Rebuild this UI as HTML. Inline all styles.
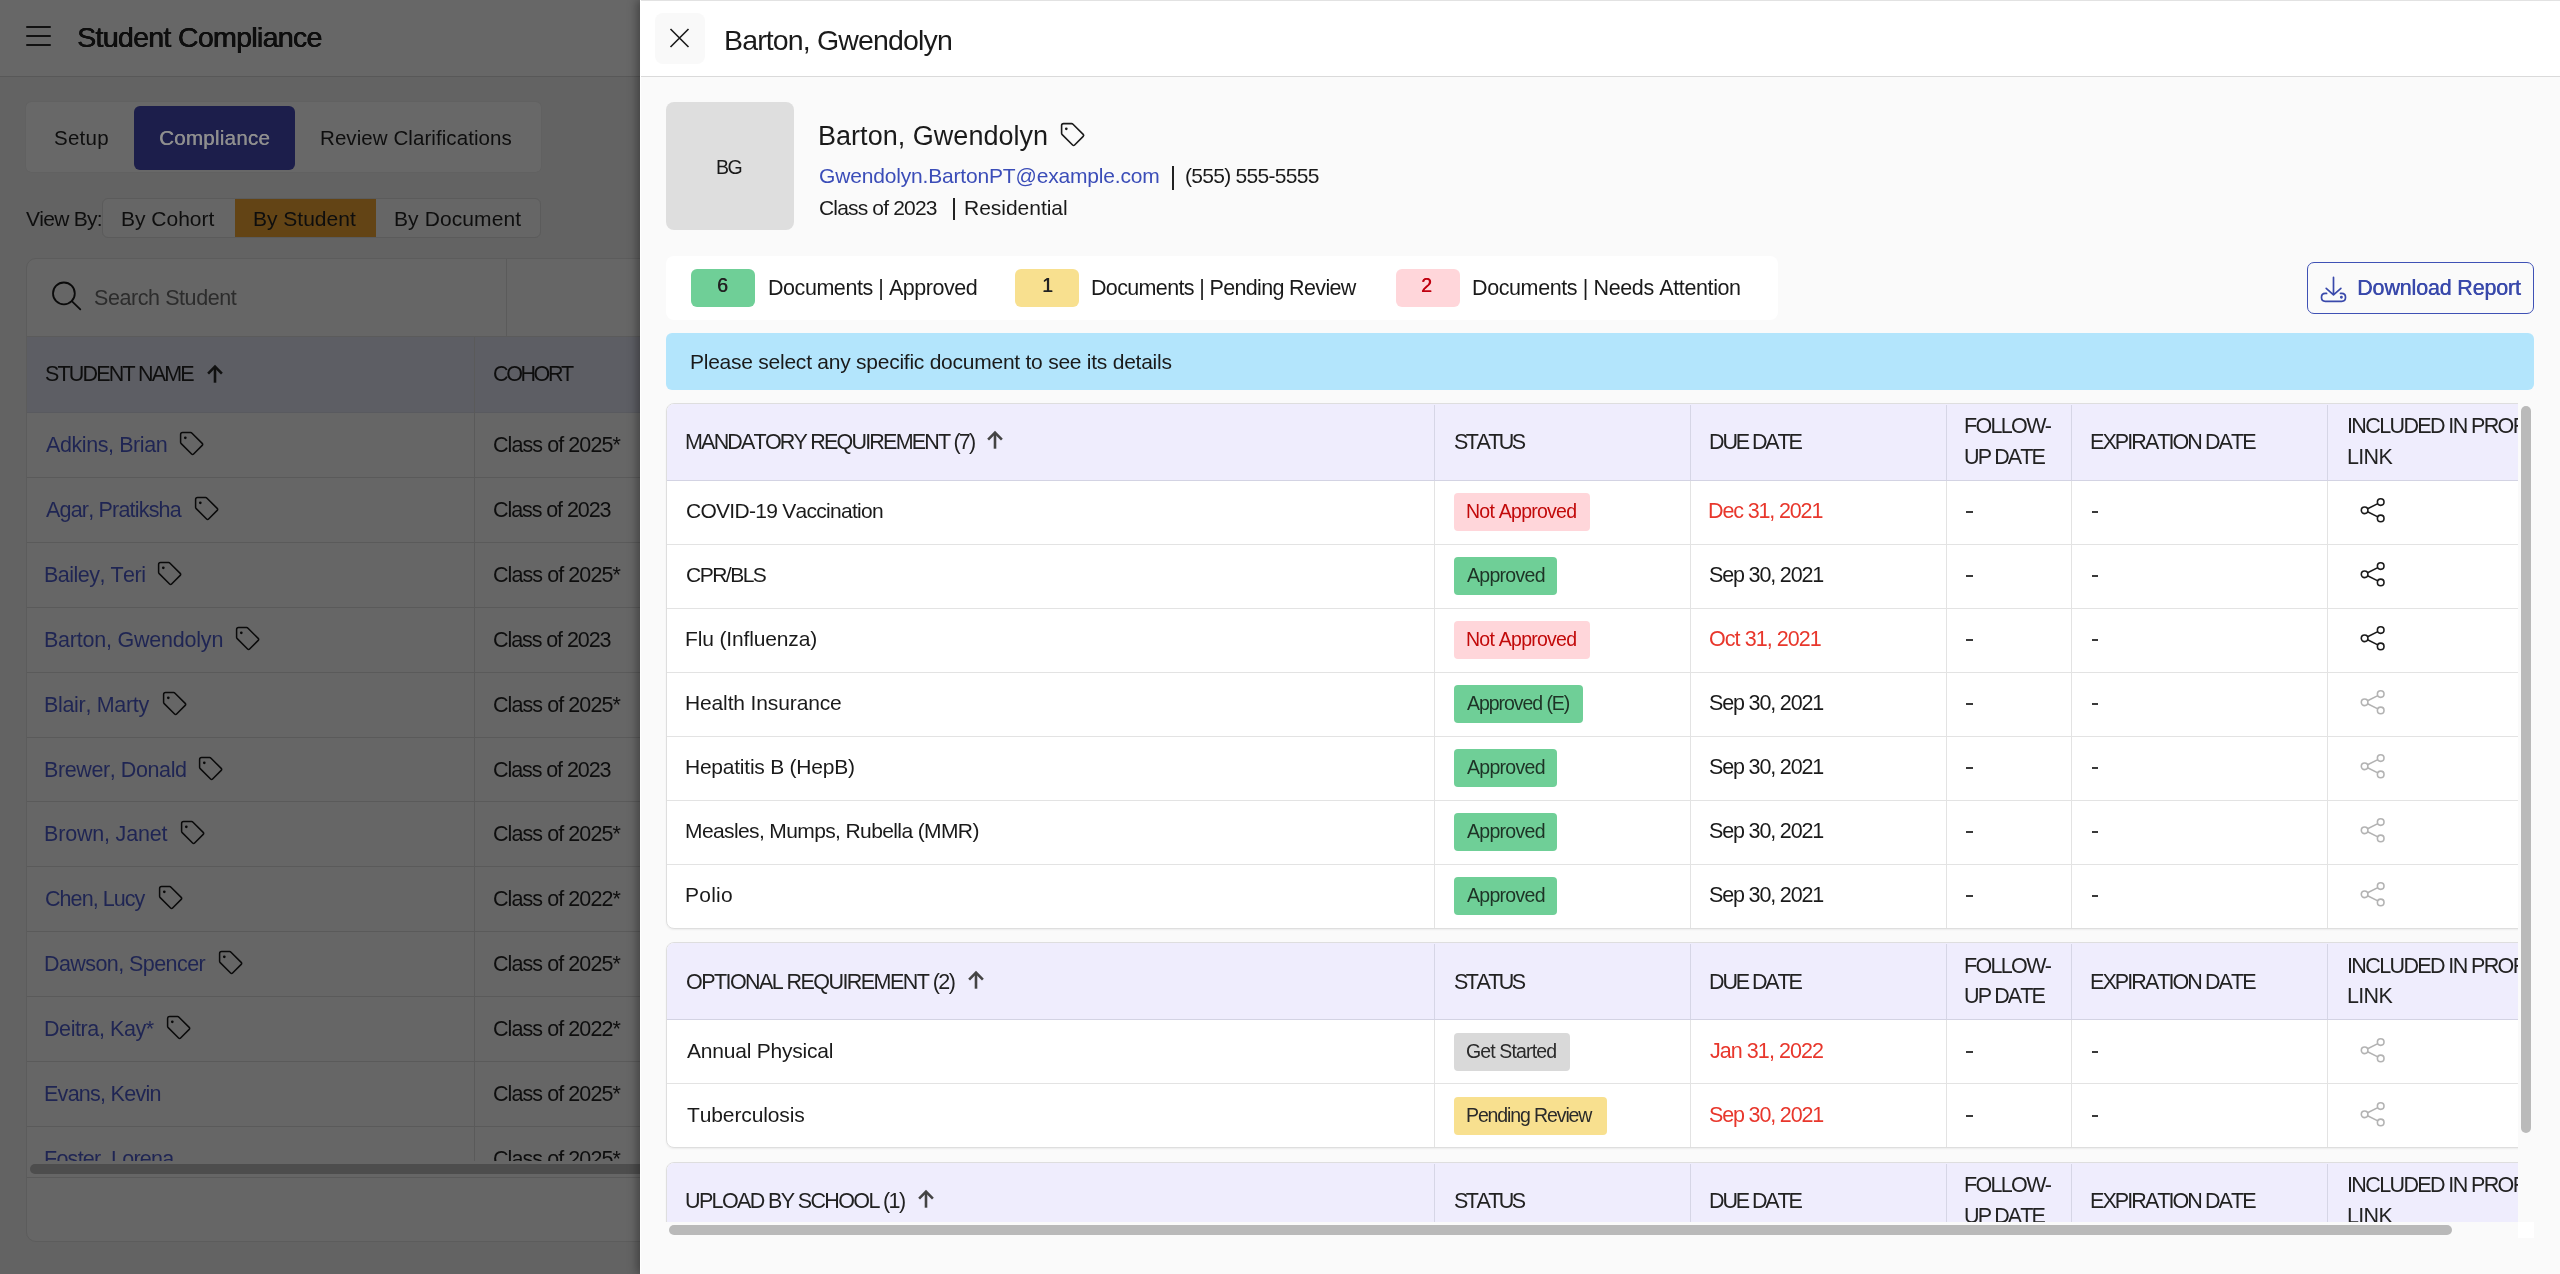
<!DOCTYPE html>
<html><head><meta charset="utf-8"><title>Student Compliance</title>
<style>
html,body{margin:0;padding:0}
body{width:2560px;height:1274px;overflow:hidden;position:relative;background:#636363;font-family:"Liberation Sans",sans-serif;font-kerning:none;}
body div{position:absolute}
.t{white-space:pre;will-change:transform}
</style></head><body>
<div style="left:0;top:0;width:640px;height:76px;background:#676767;border-bottom:1px solid #585858"></div><div style="left:26px;top:26.3px;width:25px;height:1.7px;background:#111;border-radius:1px"></div><div style="left:26px;top:35.3px;width:25px;height:1.7px;background:#111;border-radius:1px"></div><div style="left:26px;top:44.3px;width:25px;height:1.7px;background:#111;border-radius:1px"></div><div style="left:26px;top:102px;width:515px;height:70px;background:#686868;border-radius:5px;box-shadow:0 0 1px rgba(0,0,0,0.12)"></div><div style="left:134px;top:106px;width:161px;height:64px;background:#1c1e4b;border-radius:6px"></div><div style="left:102px;top:198px;width:437px;height:38px;background:#666;border:1px solid #5b5b5b;border-radius:6px"></div><div style="left:235px;top:199px;width:141px;height:38px;background:#634415"></div><div style="left:26px;top:258px;width:1000px;height:982px;background:#666;border:1px solid #5c5c5c;border-radius:10px"></div><div style="left:27px;top:336px;width:613px;height:1px;background:#5b5b5b"></div><div style="left:506px;top:259px;width:1px;height:77px;background:#5b5b5b"></div><svg style="position:absolute;left:50px;top:280px" width="34" height="34" viewBox="0 0 34 34" fill="none" stroke="#0a0a0a" stroke-width="1.8"><circle cx="13.9" cy="13.4" r="10.9"/><path d="M21.8 21.2 L30.3 29.4" stroke-linecap="round"/></svg><div style="left:27px;top:337px;width:613px;height:75px;background:#5d5e64"></div><div style="left:27px;top:412px;width:613px;height:1px;background:#595a5f"></div><div style="left:474px;top:337px;width:1px;height:824px;background:#5a5a5a"></div><div style="left:27px;top:476.90px;width:613px;height:1px;background:#5a5a5a"></div><div style="left:27px;top:541.80px;width:613px;height:1px;background:#5a5a5a"></div><div style="left:27px;top:606.70px;width:613px;height:1px;background:#5a5a5a"></div><div style="left:27px;top:671.60px;width:613px;height:1px;background:#5a5a5a"></div><div style="left:27px;top:736.50px;width:613px;height:1px;background:#5a5a5a"></div><div style="left:27px;top:801.40px;width:613px;height:1px;background:#5a5a5a"></div><div style="left:27px;top:866.30px;width:613px;height:1px;background:#5a5a5a"></div><div style="left:27px;top:931.20px;width:613px;height:1px;background:#5a5a5a"></div><div style="left:27px;top:996.10px;width:613px;height:1px;background:#5a5a5a"></div><div style="left:27px;top:1061.00px;width:613px;height:1px;background:#5a5a5a"></div><div style="left:27px;top:1125.90px;width:613px;height:1px;background:#5a5a5a"></div><svg style="position:absolute;left:202.00px;top:360.50px" width="26" height="26" viewBox="0 0 26 26" fill="none" stroke="#111" stroke-width="2.6"><path d="M13 6.5 V21.7"/><path d="M6.1 12.6 L13 5.7 L19.9 12.6" stroke-linejoin="miter"/></svg><svg style="position:absolute;left:177.50px;top:430.00px" width="28" height="28" viewBox="0 0 28 28"><path d="M2.6 4.6 Q2.6 2.6 4.6 2.6 L12.6 2.6 Q13.4 2.6 14 3.2 L24.2 13.4 Q25.2 14.4 24.2 15.4 L15.6 24 Q14.6 25 13.6 24 L3.2 13.6 Q2.6 13 2.6 12.2 Z" fill="none" stroke="#0a0a0a" stroke-width="1.5" stroke-linejoin="round"/><circle cx="7.3" cy="7.8" r="1.35" fill="#0a0a0a"/></svg><svg style="position:absolute;left:193.20px;top:494.90px" width="28" height="28" viewBox="0 0 28 28"><path d="M2.6 4.6 Q2.6 2.6 4.6 2.6 L12.6 2.6 Q13.4 2.6 14 3.2 L24.2 13.4 Q25.2 14.4 24.2 15.4 L15.6 24 Q14.6 25 13.6 24 L3.2 13.6 Q2.6 13 2.6 12.2 Z" fill="none" stroke="#0a0a0a" stroke-width="1.5" stroke-linejoin="round"/><circle cx="7.3" cy="7.8" r="1.35" fill="#0a0a0a"/></svg><svg style="position:absolute;left:155.90px;top:559.80px" width="28" height="28" viewBox="0 0 28 28"><path d="M2.6 4.6 Q2.6 2.6 4.6 2.6 L12.6 2.6 Q13.4 2.6 14 3.2 L24.2 13.4 Q25.2 14.4 24.2 15.4 L15.6 24 Q14.6 25 13.6 24 L3.2 13.6 Q2.6 13 2.6 12.2 Z" fill="none" stroke="#0a0a0a" stroke-width="1.5" stroke-linejoin="round"/><circle cx="7.3" cy="7.8" r="1.35" fill="#0a0a0a"/></svg><svg style="position:absolute;left:234.00px;top:624.70px" width="28" height="28" viewBox="0 0 28 28"><path d="M2.6 4.6 Q2.6 2.6 4.6 2.6 L12.6 2.6 Q13.4 2.6 14 3.2 L24.2 13.4 Q25.2 14.4 24.2 15.4 L15.6 24 Q14.6 25 13.6 24 L3.2 13.6 Q2.6 13 2.6 12.2 Z" fill="none" stroke="#0a0a0a" stroke-width="1.5" stroke-linejoin="round"/><circle cx="7.3" cy="7.8" r="1.35" fill="#0a0a0a"/></svg><svg style="position:absolute;left:161.00px;top:689.60px" width="28" height="28" viewBox="0 0 28 28"><path d="M2.6 4.6 Q2.6 2.6 4.6 2.6 L12.6 2.6 Q13.4 2.6 14 3.2 L24.2 13.4 Q25.2 14.4 24.2 15.4 L15.6 24 Q14.6 25 13.6 24 L3.2 13.6 Q2.6 13 2.6 12.2 Z" fill="none" stroke="#0a0a0a" stroke-width="1.5" stroke-linejoin="round"/><circle cx="7.3" cy="7.8" r="1.35" fill="#0a0a0a"/></svg><svg style="position:absolute;left:197.30px;top:754.50px" width="28" height="28" viewBox="0 0 28 28"><path d="M2.6 4.6 Q2.6 2.6 4.6 2.6 L12.6 2.6 Q13.4 2.6 14 3.2 L24.2 13.4 Q25.2 14.4 24.2 15.4 L15.6 24 Q14.6 25 13.6 24 L3.2 13.6 Q2.6 13 2.6 12.2 Z" fill="none" stroke="#0a0a0a" stroke-width="1.5" stroke-linejoin="round"/><circle cx="7.3" cy="7.8" r="1.35" fill="#0a0a0a"/></svg><svg style="position:absolute;left:178.50px;top:819.40px" width="28" height="28" viewBox="0 0 28 28"><path d="M2.6 4.6 Q2.6 2.6 4.6 2.6 L12.6 2.6 Q13.4 2.6 14 3.2 L24.2 13.4 Q25.2 14.4 24.2 15.4 L15.6 24 Q14.6 25 13.6 24 L3.2 13.6 Q2.6 13 2.6 12.2 Z" fill="none" stroke="#0a0a0a" stroke-width="1.5" stroke-linejoin="round"/><circle cx="7.3" cy="7.8" r="1.35" fill="#0a0a0a"/></svg><svg style="position:absolute;left:157.10px;top:884.30px" width="28" height="28" viewBox="0 0 28 28"><path d="M2.6 4.6 Q2.6 2.6 4.6 2.6 L12.6 2.6 Q13.4 2.6 14 3.2 L24.2 13.4 Q25.2 14.4 24.2 15.4 L15.6 24 Q14.6 25 13.6 24 L3.2 13.6 Q2.6 13 2.6 12.2 Z" fill="none" stroke="#0a0a0a" stroke-width="1.5" stroke-linejoin="round"/><circle cx="7.3" cy="7.8" r="1.35" fill="#0a0a0a"/></svg><svg style="position:absolute;left:216.50px;top:949.20px" width="28" height="28" viewBox="0 0 28 28"><path d="M2.6 4.6 Q2.6 2.6 4.6 2.6 L12.6 2.6 Q13.4 2.6 14 3.2 L24.2 13.4 Q25.2 14.4 24.2 15.4 L15.6 24 Q14.6 25 13.6 24 L3.2 13.6 Q2.6 13 2.6 12.2 Z" fill="none" stroke="#0a0a0a" stroke-width="1.5" stroke-linejoin="round"/><circle cx="7.3" cy="7.8" r="1.35" fill="#0a0a0a"/></svg><svg style="position:absolute;left:165.00px;top:1014.10px" width="28" height="28" viewBox="0 0 28 28"><path d="M2.6 4.6 Q2.6 2.6 4.6 2.6 L12.6 2.6 Q13.4 2.6 14 3.2 L24.2 13.4 Q25.2 14.4 24.2 15.4 L15.6 24 Q14.6 25 13.6 24 L3.2 13.6 Q2.6 13 2.6 12.2 Z" fill="none" stroke="#0a0a0a" stroke-width="1.5" stroke-linejoin="round"/><circle cx="7.3" cy="7.8" r="1.35" fill="#0a0a0a"/></svg><div style="left:30px;top:1164px;width:620px;height:9.6px;background:#4d4d4d;border-radius:5px"></div><div style="left:27px;top:1177px;width:613px;height:1px;background:#5a5a5a"></div>
<div class="t" style="left:76.70px;top:23.00px;font-size:28.5px;line-height:28.5px;letter-spacing:-0.676px;color:#0e0e0e;text-shadow:0.6px 0 0 #0e0e0e,0 0.3px 0 #0e0e0e;">Student Compliance</div><div class="t" style="left:54.00px;top:127.70px;font-size:20.5px;line-height:20.5px;letter-spacing:0.250px;color:#0e0e0e;">Setup</div><div class="t" style="left:159.00px;top:127.70px;font-size:20.5px;line-height:20.5px;letter-spacing:0.278px;color:#8f8f8f;text-shadow:0.4px 0 0 #8f8f8f;">Compliance</div><div class="t" style="left:320.00px;top:127.70px;font-size:20.5px;line-height:20.5px;letter-spacing:0.075px;color:#0e0e0e;">Review Clarifications</div><div class="t" style="left:26.00px;top:207.60px;font-size:21px;line-height:21px;letter-spacing:-0.714px;color:#0e0e0e;">View By:</div><div class="t" style="left:121.00px;top:207.60px;font-size:21px;line-height:21px;letter-spacing:0.000px;color:#0e0e0e;">By Cohort</div><div class="t" style="left:253.00px;top:207.60px;font-size:21px;line-height:21px;letter-spacing:0.000px;color:#0e0e0e;">By Student</div><div class="t" style="left:394.00px;top:207.60px;font-size:21px;line-height:21px;letter-spacing:0.100px;color:#0e0e0e;">By Document</div><div class="t" style="left:93.50px;top:288.00px;font-size:21.5px;line-height:21.5px;letter-spacing:-0.423px;color:#2c2c2c;">Search Student</div><div class="t" style="left:45.00px;top:364.00px;font-size:21.5px;line-height:21.5px;letter-spacing:-1.818px;color:#0e0e0e;">STUDENT NAME</div><div class="t" style="left:493.00px;top:364.00px;font-size:21.5px;line-height:21.5px;letter-spacing:-2.400px;color:#0e0e0e;">COHORT</div><div class="t" style="left:46.00px;top:435.00px;font-size:21.5px;line-height:21.5px;letter-spacing:-0.417px;color:#1f2553;">Adkins, Brian</div><div class="t" style="left:493.00px;top:435.00px;font-size:21.5px;line-height:21.5px;letter-spacing:-0.923px;color:#0e0e0e;">Class of 2025*</div><div class="t" style="left:46.00px;top:499.90px;font-size:21.5px;line-height:21.5px;letter-spacing:-0.807px;color:#1f2553;">Agar, Pratiksha</div><div class="t" style="left:493.00px;top:499.90px;font-size:21.5px;line-height:21.5px;letter-spacing:-1.083px;color:#0e0e0e;">Class of 2023</div><div class="t" style="left:44.00px;top:564.80px;font-size:21.5px;line-height:21.5px;letter-spacing:-0.509px;color:#1f2553;">Bailey, Teri</div><div class="t" style="left:493.00px;top:564.80px;font-size:21.5px;line-height:21.5px;letter-spacing:-0.923px;color:#0e0e0e;">Class of 2025*</div><div class="t" style="left:44.00px;top:629.70px;font-size:21.5px;line-height:21.5px;letter-spacing:-0.219px;color:#1f2553;">Barton, Gwendolyn</div><div class="t" style="left:493.00px;top:629.70px;font-size:21.5px;line-height:21.5px;letter-spacing:-1.083px;color:#0e0e0e;">Class of 2023</div><div class="t" style="left:44.00px;top:694.60px;font-size:21.5px;line-height:21.5px;letter-spacing:-0.318px;color:#1f2553;">Blair, Marty</div><div class="t" style="left:493.00px;top:694.60px;font-size:21.5px;line-height:21.5px;letter-spacing:-0.923px;color:#0e0e0e;">Class of 2025*</div><div class="t" style="left:44.00px;top:759.50px;font-size:21.5px;line-height:21.5px;letter-spacing:-0.400px;color:#1f2553;">Brewer, Donald</div><div class="t" style="left:493.00px;top:759.50px;font-size:21.5px;line-height:21.5px;letter-spacing:-1.083px;color:#0e0e0e;">Class of 2023</div><div class="t" style="left:44.00px;top:824.40px;font-size:21.5px;line-height:21.5px;letter-spacing:-0.182px;color:#1f2553;">Brown, Janet</div><div class="t" style="left:493.00px;top:824.40px;font-size:21.5px;line-height:21.5px;letter-spacing:-0.923px;color:#0e0e0e;">Class of 2025*</div><div class="t" style="left:45.00px;top:889.30px;font-size:21.5px;line-height:21.5px;letter-spacing:-0.933px;color:#1f2553;">Chen, Lucy</div><div class="t" style="left:493.00px;top:889.30px;font-size:21.5px;line-height:21.5px;letter-spacing:-0.923px;color:#0e0e0e;">Class of 2022*</div><div class="t" style="left:44.00px;top:954.20px;font-size:21.5px;line-height:21.5px;letter-spacing:-0.571px;color:#1f2553;">Dawson, Spencer</div><div class="t" style="left:493.00px;top:954.20px;font-size:21.5px;line-height:21.5px;letter-spacing:-0.923px;color:#0e0e0e;">Class of 2025*</div><div class="t" style="left:44.00px;top:1019.10px;font-size:21.5px;line-height:21.5px;letter-spacing:-0.409px;color:#1f2553;">Deitra, Kay*</div><div class="t" style="left:493.00px;top:1019.10px;font-size:21.5px;line-height:21.5px;letter-spacing:-0.923px;color:#0e0e0e;">Class of 2022*</div><div class="t" style="left:44.00px;top:1084.00px;font-size:21.5px;line-height:21.5px;letter-spacing:-0.727px;color:#1f2553;">Evans, Kevin</div><div class="t" style="left:493.00px;top:1084.00px;font-size:21.5px;line-height:21.5px;letter-spacing:-0.923px;color:#0e0e0e;">Class of 2025*</div><div style="position:absolute;left:0;top:0;width:640px;height:1161px;overflow:hidden"><div class="t" style="left:44.00px;top:1148.90px;font-size:21.5px;line-height:21.5px;letter-spacing:-0.738px;color:#1f2553;">Foster, Lorena</div></div><div style="position:absolute;left:0;top:0;width:640px;height:1161px;overflow:hidden"><div class="t" style="left:493.00px;top:1148.90px;font-size:21.5px;line-height:21.5px;letter-spacing:-0.923px;color:#0e0e0e;">Class of 2025*</div></div>
<div style="left:640px;top:0;width:1920px;height:1274px;background:#fafafa;box-shadow:-3px 0 9px rgba(0,0,0,0.35)"></div><div style="left:640px;top:0;width:1px;height:1274px;background:#fff"></div><div style="left:641px;top:0;width:1919px;height:76px;background:#fff;border-top:1px solid #e2e2e2;box-sizing:border-box"></div><div style="left:641px;top:76px;width:1919px;height:1px;background:#dadada"></div><div style="left:655px;top:13px;width:50px;height:51px;background:#f9f9f9;border-radius:8px"></div><svg style="position:absolute;left:668px;top:27px" width="23" height="23" viewBox="0 0 23 23" stroke="#1a1a1a" stroke-width="1.6"><path d="M2.5 2 L20.5 20 M20.5 2 L2.5 20"/></svg><div style="left:666px;top:102px;width:128px;height:128px;background:#dedede;border-radius:8px"></div><svg style="position:absolute;left:1058.50px;top:120.50px" width="28" height="28" viewBox="0 0 28 28"><path d="M2.6 4.6 Q2.6 2.6 4.6 2.6 L12.6 2.6 Q13.4 2.6 14 3.2 L24.2 13.4 Q25.2 14.4 24.2 15.4 L15.6 24 Q14.6 25 13.6 24 L3.2 13.6 Q2.6 13 2.6 12.2 Z" fill="none" stroke="#1a1a1a" stroke-width="1.6" stroke-linejoin="round"/><circle cx="7.3" cy="7.8" r="1.35" fill="#1a1a1a"/></svg><div style="left:1172.3px;top:166px;width:1.6px;height:24px;background:#222"></div><div style="left:953px;top:198px;width:1.6px;height:22px;background:#222"></div><div style="left:666px;top:256px;width:1112px;height:64px;background:#fff;border-radius:8px"></div><div style="left:691px;top:269px;width:64px;height:38px;background:#6fcf97;border-radius:6px"></div><div style="left:1015px;top:269px;width:64px;height:38px;background:#f8e08f;border-radius:6px"></div><div style="left:1396px;top:269px;width:64px;height:38px;background:#ffd6da;border-radius:6px"></div><div style="left:2307px;top:262px;width:227px;height:52px;border:1.4px solid #3f51b5;border-radius:7px;box-sizing:border-box"></div><svg style="position:absolute;left:2316px;top:272px" width="34" height="34" viewBox="0 0 34 34" fill="none" stroke="#3949ab" stroke-width="1.7" stroke-linecap="round" stroke-linejoin="round"><path d="M17.5 5.4 V22.6 M10.2 16.4 L17.5 22.8 L24.9 16.4"/><path d="M10.6 21.4 H9.3 Q5.5 21.4 5.5 25.2 V25.6 Q5.5 29.3 9.3 29.3 H25.7 Q29.5 29.3 29.5 25.6 V25.2 Q29.5 21.4 25.7 21.4 H24.5"/><circle cx="25.4" cy="25.3" r="0.6" fill="#3949ab"/></svg><div style="left:666px;top:333px;width:1868px;height:57px;background:#b3e5fc;border-radius:6px"></div>
<div class="t" style="left:724.00px;top:26.20px;font-size:28.5px;line-height:28.5px;letter-spacing:-0.850px;color:#1a1a1a;">Barton, Gwendolyn</div><div class="t" style="left:818.30px;top:122.80px;font-size:27px;line-height:27px;letter-spacing:0.031px;color:#1a1a1a;">Barton, Gwendolyn</div><div class="t" style="left:716.40px;top:157.60px;font-size:19.5px;line-height:19.5px;letter-spacing:-1.400px;color:#1a1a1a;">BG</div><div class="t" style="left:819.00px;top:165.40px;font-size:21px;line-height:21px;letter-spacing:-0.172px;color:#3b4db8;">Gwendolyn.BartonPT@example.com</div><div class="t" style="left:1185.30px;top:165.40px;font-size:21px;line-height:21px;letter-spacing:-0.715px;color:#1a1a1a;">(555) 555-5555</div><div class="t" style="left:819.00px;top:196.50px;font-size:21px;line-height:21px;letter-spacing:-0.833px;color:#1a1a1a;">Class of 2023</div><div class="t" style="left:963.70px;top:196.50px;font-size:21px;line-height:21px;letter-spacing:-0.020px;color:#1a1a1a;">Residential</div><div class="t" style="left:717.40px;top:275.70px;font-size:19.5px;line-height:19.5px;letter-spacing:0.000px;color:#222;text-shadow:0.5px 0 0 #222;">6</div><div class="t" style="left:1041.50px;top:275.70px;font-size:19.5px;line-height:19.5px;letter-spacing:0.000px;color:#222;text-shadow:0.5px 0 0 #222;">1</div><div class="t" style="left:1421.30px;top:275.70px;font-size:19.5px;line-height:19.5px;letter-spacing:0.000px;color:#c00010;text-shadow:0.5px 0 0 #c00010;">2</div><div class="t" style="left:767.50px;top:277.80px;font-size:21.5px;line-height:21.5px;letter-spacing:-0.447px;color:#1a1a1a;">Documents | Approved</div><div class="t" style="left:1091.30px;top:277.80px;font-size:21.5px;line-height:21.5px;letter-spacing:-0.652px;color:#1a1a1a;">Documents | Pending Review</div><div class="t" style="left:1471.50px;top:277.80px;font-size:21.5px;line-height:21.5px;letter-spacing:-0.392px;color:#1a1a1a;">Documents | Needs Attention</div><div class="t" style="left:2356.50px;top:278.00px;font-size:21.5px;line-height:21.5px;letter-spacing:-0.164px;color:#3949ab;text-shadow:0.5px 0 0 #3949ab;">Download Report</div><div class="t" style="left:690.00px;top:350.80px;font-size:21px;line-height:21px;letter-spacing:-0.245px;color:#1a1a1a;">Please select any specific document to see its details</div>
<div style="left:0;top:0;width:2518px;height:1222px;overflow:hidden">
<div style="left:666px;top:403px;width:1900px;height:525.5px;background:#fff;border:1px solid #dedede;border-radius:8px;box-sizing:border-box;box-shadow:0 1px 2px rgba(0,0,0,0.06)"></div><div style="left:667px;top:404px;width:1899px;height:75.5px;background:#efedfd;border-radius:7px 0 0 0"></div><div style="left:667px;top:479.5px;width:1899px;height:1px;background:#d3d3e3"></div><div style="left:1434px;top:404.5px;width:1px;height:75px;background:#d6d6e6"></div><div style="left:1434px;top:480.5px;width:1px;height:447px;background:#e3e3e3"></div><div style="left:1690px;top:404.5px;width:1px;height:75px;background:#d6d6e6"></div><div style="left:1690px;top:480.5px;width:1px;height:447px;background:#e3e3e3"></div><div style="left:1946px;top:404.5px;width:1px;height:75px;background:#d6d6e6"></div><div style="left:1946px;top:480.5px;width:1px;height:447px;background:#e3e3e3"></div><div style="left:2071px;top:404.5px;width:1px;height:75px;background:#d6d6e6"></div><div style="left:2071px;top:480.5px;width:1px;height:447px;background:#e3e3e3"></div><div style="left:2327px;top:404.5px;width:1px;height:75px;background:#d6d6e6"></div><div style="left:2327px;top:480.5px;width:1px;height:447px;background:#e3e3e3"></div><div style="left:667px;top:543.5px;width:1899px;height:1px;background:#e3e3e3"></div><div style="left:667px;top:607.5px;width:1899px;height:1px;background:#e3e3e3"></div><div style="left:667px;top:671.5px;width:1899px;height:1px;background:#e3e3e3"></div><div style="left:667px;top:735.5px;width:1899px;height:1px;background:#e3e3e3"></div><div style="left:667px;top:799.5px;width:1899px;height:1px;background:#e3e3e3"></div><div style="left:667px;top:863.5px;width:1899px;height:1px;background:#e3e3e3"></div><div style="left:1454px;top:493.0px;width:136px;height:38px;background:#ffd6da;border-radius:4px"></div><div style="left:1966px;top:511px;width:6.5px;height:2px;background:#3a3a3a"></div><div style="left:2091.5px;top:511px;width:6.5px;height:2px;background:#3a3a3a"></div><svg style="position:absolute;left:2360.00px;top:497.00px" width="28" height="28" viewBox="0 0 28 28" fill="none" stroke="#1a1a1a" stroke-width="1.6"><circle cx="20.7" cy="5.1" r="3.3"/><circle cx="4.6" cy="13.3" r="3.3"/><circle cx="20.7" cy="21.4" r="3.3"/><path d="M7.6 11.8 L17.8 6.6 M7.6 14.8 L17.8 19.9"/></svg><div style="left:1454px;top:557.0px;width:103px;height:38px;background:#6fcf97;border-radius:4px"></div><div style="left:1966px;top:575px;width:6.5px;height:2px;background:#3a3a3a"></div><div style="left:2091.5px;top:575px;width:6.5px;height:2px;background:#3a3a3a"></div><svg style="position:absolute;left:2360.00px;top:561.00px" width="28" height="28" viewBox="0 0 28 28" fill="none" stroke="#1a1a1a" stroke-width="1.6"><circle cx="20.7" cy="5.1" r="3.3"/><circle cx="4.6" cy="13.3" r="3.3"/><circle cx="20.7" cy="21.4" r="3.3"/><path d="M7.6 11.8 L17.8 6.6 M7.6 14.8 L17.8 19.9"/></svg><div style="left:1454px;top:621.0px;width:136px;height:38px;background:#ffd6da;border-radius:4px"></div><div style="left:1966px;top:639px;width:6.5px;height:2px;background:#3a3a3a"></div><div style="left:2091.5px;top:639px;width:6.5px;height:2px;background:#3a3a3a"></div><svg style="position:absolute;left:2360.00px;top:625.00px" width="28" height="28" viewBox="0 0 28 28" fill="none" stroke="#1a1a1a" stroke-width="1.6"><circle cx="20.7" cy="5.1" r="3.3"/><circle cx="4.6" cy="13.3" r="3.3"/><circle cx="20.7" cy="21.4" r="3.3"/><path d="M7.6 11.8 L17.8 6.6 M7.6 14.8 L17.8 19.9"/></svg><div style="left:1454px;top:685.0px;width:129px;height:38px;background:#6fcf97;border-radius:4px"></div><div style="left:1966px;top:703px;width:6.5px;height:2px;background:#3a3a3a"></div><div style="left:2091.5px;top:703px;width:6.5px;height:2px;background:#3a3a3a"></div><svg style="position:absolute;left:2360.00px;top:689.00px" width="28" height="28" viewBox="0 0 28 28" fill="none" stroke="#b3b3b3" stroke-width="1.6"><circle cx="20.7" cy="5.1" r="3.3"/><circle cx="4.6" cy="13.3" r="3.3"/><circle cx="20.7" cy="21.4" r="3.3"/><path d="M7.6 11.8 L17.8 6.6 M7.6 14.8 L17.8 19.9"/></svg><div style="left:1454px;top:749.0px;width:103px;height:38px;background:#6fcf97;border-radius:4px"></div><div style="left:1966px;top:767px;width:6.5px;height:2px;background:#3a3a3a"></div><div style="left:2091.5px;top:767px;width:6.5px;height:2px;background:#3a3a3a"></div><svg style="position:absolute;left:2360.00px;top:753.00px" width="28" height="28" viewBox="0 0 28 28" fill="none" stroke="#b3b3b3" stroke-width="1.6"><circle cx="20.7" cy="5.1" r="3.3"/><circle cx="4.6" cy="13.3" r="3.3"/><circle cx="20.7" cy="21.4" r="3.3"/><path d="M7.6 11.8 L17.8 6.6 M7.6 14.8 L17.8 19.9"/></svg><div style="left:1454px;top:813.0px;width:103px;height:38px;background:#6fcf97;border-radius:4px"></div><div style="left:1966px;top:831px;width:6.5px;height:2px;background:#3a3a3a"></div><div style="left:2091.5px;top:831px;width:6.5px;height:2px;background:#3a3a3a"></div><svg style="position:absolute;left:2360.00px;top:817.00px" width="28" height="28" viewBox="0 0 28 28" fill="none" stroke="#b3b3b3" stroke-width="1.6"><circle cx="20.7" cy="5.1" r="3.3"/><circle cx="4.6" cy="13.3" r="3.3"/><circle cx="20.7" cy="21.4" r="3.3"/><path d="M7.6 11.8 L17.8 6.6 M7.6 14.8 L17.8 19.9"/></svg><div style="left:1454px;top:877.0px;width:103px;height:38px;background:#6fcf97;border-radius:4px"></div><div style="left:1966px;top:895px;width:6.5px;height:2px;background:#3a3a3a"></div><div style="left:2091.5px;top:895px;width:6.5px;height:2px;background:#3a3a3a"></div><svg style="position:absolute;left:2360.00px;top:881.00px" width="28" height="28" viewBox="0 0 28 28" fill="none" stroke="#b3b3b3" stroke-width="1.6"><circle cx="20.7" cy="5.1" r="3.3"/><circle cx="4.6" cy="13.3" r="3.3"/><circle cx="20.7" cy="21.4" r="3.3"/><path d="M7.6 11.8 L17.8 6.6 M7.6 14.8 L17.8 19.9"/></svg><div style="left:666px;top:942px;width:1900px;height:206px;background:#fff;border:1px solid #dedede;border-radius:8px;box-sizing:border-box;box-shadow:0 1px 2px rgba(0,0,0,0.06)"></div><div style="left:667px;top:943px;width:1899px;height:76px;background:#efedfd;border-radius:7px 0 0 0"></div><div style="left:667px;top:1019px;width:1899px;height:1px;background:#d3d3e3"></div><div style="left:1434px;top:944px;width:1px;height:75px;background:#d6d6e6"></div><div style="left:1434px;top:1020px;width:1px;height:127px;background:#e3e3e3"></div><div style="left:1690px;top:944px;width:1px;height:75px;background:#d6d6e6"></div><div style="left:1690px;top:1020px;width:1px;height:127px;background:#e3e3e3"></div><div style="left:1946px;top:944px;width:1px;height:75px;background:#d6d6e6"></div><div style="left:1946px;top:1020px;width:1px;height:127px;background:#e3e3e3"></div><div style="left:2071px;top:944px;width:1px;height:75px;background:#d6d6e6"></div><div style="left:2071px;top:1020px;width:1px;height:127px;background:#e3e3e3"></div><div style="left:2327px;top:944px;width:1px;height:75px;background:#d6d6e6"></div><div style="left:2327px;top:1020px;width:1px;height:127px;background:#e3e3e3"></div><div style="left:667px;top:1083px;width:1899px;height:1px;background:#e3e3e3"></div><div style="left:1454px;top:1032.5px;width:116px;height:38px;background:#d9d9d9;border-radius:4px"></div><div style="left:1966px;top:1051px;width:6.5px;height:2px;background:#3a3a3a"></div><div style="left:2091.5px;top:1051px;width:6.5px;height:2px;background:#3a3a3a"></div><svg style="position:absolute;left:2360.00px;top:1036.50px" width="28" height="28" viewBox="0 0 28 28" fill="none" stroke="#b3b3b3" stroke-width="1.6"><circle cx="20.7" cy="5.1" r="3.3"/><circle cx="4.6" cy="13.3" r="3.3"/><circle cx="20.7" cy="21.4" r="3.3"/><path d="M7.6 11.8 L17.8 6.6 M7.6 14.8 L17.8 19.9"/></svg><div style="left:1454px;top:1096.5px;width:153px;height:38px;background:#f8e08f;border-radius:4px"></div><div style="left:1966px;top:1115px;width:6.5px;height:2px;background:#3a3a3a"></div><div style="left:2091.5px;top:1115px;width:6.5px;height:2px;background:#3a3a3a"></div><svg style="position:absolute;left:2360.00px;top:1100.50px" width="28" height="28" viewBox="0 0 28 28" fill="none" stroke="#b3b3b3" stroke-width="1.6"><circle cx="20.7" cy="5.1" r="3.3"/><circle cx="4.6" cy="13.3" r="3.3"/><circle cx="20.7" cy="21.4" r="3.3"/><path d="M7.6 11.8 L17.8 6.6 M7.6 14.8 L17.8 19.9"/></svg><div style="left:666px;top:1162px;width:1900px;height:141.5px;background:#fff;border:1px solid #dedede;border-radius:8px;box-sizing:border-box;box-shadow:0 1px 2px rgba(0,0,0,0.06)"></div><div style="left:667px;top:1163px;width:1899px;height:75.5px;background:#efedfd;border-radius:7px 0 0 0"></div><div style="left:667px;top:1238.5px;width:1899px;height:1px;background:#d3d3e3"></div><div style="left:1434px;top:1163.5px;width:1px;height:75px;background:#d6d6e6"></div><div style="left:1434px;top:1239.5px;width:1px;height:63px;background:#e3e3e3"></div><div style="left:1690px;top:1163.5px;width:1px;height:75px;background:#d6d6e6"></div><div style="left:1690px;top:1239.5px;width:1px;height:63px;background:#e3e3e3"></div><div style="left:1946px;top:1163.5px;width:1px;height:75px;background:#d6d6e6"></div><div style="left:1946px;top:1239.5px;width:1px;height:63px;background:#e3e3e3"></div><div style="left:2071px;top:1163.5px;width:1px;height:75px;background:#d6d6e6"></div><div style="left:2071px;top:1239.5px;width:1px;height:63px;background:#e3e3e3"></div><div style="left:2327px;top:1163.5px;width:1px;height:75px;background:#d6d6e6"></div><div style="left:2327px;top:1239.5px;width:1px;height:63px;background:#e3e3e3"></div><svg style="position:absolute;left:981.90px;top:427.20px" width="26" height="26" viewBox="0 0 26 26" fill="none" stroke="#444" stroke-width="2.6"><path d="M13 6.5 V21.7"/><path d="M6.1 12.6 L13 5.7 L19.9 12.6" stroke-linejoin="miter"/></svg><svg style="position:absolute;left:963.00px;top:966.70px" width="26" height="26" viewBox="0 0 26 26" fill="none" stroke="#444" stroke-width="2.6"><path d="M13 6.5 V21.7"/><path d="M6.1 12.6 L13 5.7 L19.9 12.6" stroke-linejoin="miter"/></svg><svg style="position:absolute;left:912.70px;top:1186.20px" width="26" height="26" viewBox="0 0 26 26" fill="none" stroke="#444" stroke-width="2.6"><path d="M13 6.5 V21.7"/><path d="M6.1 12.6 L13 5.7 L19.9 12.6" stroke-linejoin="miter"/></svg>
<div style="position:absolute;left:0;top:0;width:2518px;height:2000px;overflow:hidden"><div class="t" style="left:684.70px;top:432.00px;font-size:21.5px;line-height:21.5px;letter-spacing:-1.804px;color:#222;">MANDATORY REQUIREMENT (7)</div></div><div style="position:absolute;left:0;top:0;width:2518px;height:2000px;overflow:hidden"><div class="t" style="left:1453.50px;top:432.00px;font-size:21.5px;line-height:21.5px;letter-spacing:-2.520px;color:#222;">STATUS</div></div><div style="position:absolute;left:0;top:0;width:2518px;height:2000px;overflow:hidden"><div class="t" style="left:1708.50px;top:432.00px;font-size:21.5px;line-height:21.5px;letter-spacing:-2.107px;color:#222;">DUE DATE</div></div><div style="position:absolute;left:0;top:0;width:2518px;height:2000px;overflow:hidden"><div class="t" style="left:2089.75px;top:432.00px;font-size:21.5px;line-height:21.5px;letter-spacing:-1.929px;color:#222;">EXPIRATION DATE</div></div><div style="position:absolute;left:0;top:0;width:2518px;height:2000px;overflow:hidden"><div class="t" style="left:1964.25px;top:416.25px;font-size:21.5px;line-height:21.5px;letter-spacing:-1.667px;color:#222;">FOLLOW-</div></div><div style="position:absolute;left:0;top:0;width:2518px;height:2000px;overflow:hidden"><div class="t" style="left:1964.25px;top:446.75px;font-size:21.5px;line-height:21.5px;letter-spacing:-1.875px;color:#222;">UP DATE</div></div><div style="position:absolute;left:0;top:0;width:2518px;height:2000px;overflow:hidden"><div class="t" style="left:2346.60px;top:416.25px;font-size:21.5px;line-height:21.5px;letter-spacing:-1.614px;color:#222;">INCLUDED IN PROFILE</div></div><div style="position:absolute;left:0;top:0;width:2518px;height:2000px;overflow:hidden"><div class="t" style="left:2346.60px;top:446.75px;font-size:21.5px;line-height:21.5px;letter-spacing:-0.667px;color:#222;">LINK</div></div><div style="position:absolute;left:0;top:0;width:2518px;height:2000px;overflow:hidden"><div class="t" style="left:685.70px;top:971.50px;font-size:21.5px;line-height:21.5px;letter-spacing:-1.565px;color:#222;">OPTIONAL REQUIREMENT (2)</div></div><div style="position:absolute;left:0;top:0;width:2518px;height:2000px;overflow:hidden"><div class="t" style="left:1453.50px;top:971.50px;font-size:21.5px;line-height:21.5px;letter-spacing:-2.520px;color:#222;">STATUS</div></div><div style="position:absolute;left:0;top:0;width:2518px;height:2000px;overflow:hidden"><div class="t" style="left:1708.50px;top:971.50px;font-size:21.5px;line-height:21.5px;letter-spacing:-2.107px;color:#222;">DUE DATE</div></div><div style="position:absolute;left:0;top:0;width:2518px;height:2000px;overflow:hidden"><div class="t" style="left:2089.75px;top:971.50px;font-size:21.5px;line-height:21.5px;letter-spacing:-1.929px;color:#222;">EXPIRATION DATE</div></div><div style="position:absolute;left:0;top:0;width:2518px;height:2000px;overflow:hidden"><div class="t" style="left:1964.25px;top:955.75px;font-size:21.5px;line-height:21.5px;letter-spacing:-1.667px;color:#222;">FOLLOW-</div></div><div style="position:absolute;left:0;top:0;width:2518px;height:2000px;overflow:hidden"><div class="t" style="left:1964.25px;top:986.25px;font-size:21.5px;line-height:21.5px;letter-spacing:-1.875px;color:#222;">UP DATE</div></div><div style="position:absolute;left:0;top:0;width:2518px;height:2000px;overflow:hidden"><div class="t" style="left:2346.60px;top:955.75px;font-size:21.5px;line-height:21.5px;letter-spacing:-1.614px;color:#222;">INCLUDED IN PROFILE</div></div><div style="position:absolute;left:0;top:0;width:2518px;height:2000px;overflow:hidden"><div class="t" style="left:2346.60px;top:986.25px;font-size:21.5px;line-height:21.5px;letter-spacing:-0.667px;color:#222;">LINK</div></div><div style="position:absolute;left:0;top:0;width:2518px;height:1222px;overflow:hidden"><div class="t" style="left:684.70px;top:1191.00px;font-size:21.5px;line-height:21.5px;letter-spacing:-1.632px;color:#222;">UPLOAD BY SCHOOL (1)</div></div><div style="position:absolute;left:0;top:0;width:2518px;height:1222px;overflow:hidden"><div class="t" style="left:1453.50px;top:1191.00px;font-size:21.5px;line-height:21.5px;letter-spacing:-2.520px;color:#222;">STATUS</div></div><div style="position:absolute;left:0;top:0;width:2518px;height:1222px;overflow:hidden"><div class="t" style="left:1708.50px;top:1191.00px;font-size:21.5px;line-height:21.5px;letter-spacing:-2.107px;color:#222;">DUE DATE</div></div><div style="position:absolute;left:0;top:0;width:2518px;height:1222px;overflow:hidden"><div class="t" style="left:2089.75px;top:1191.00px;font-size:21.5px;line-height:21.5px;letter-spacing:-1.929px;color:#222;">EXPIRATION DATE</div></div><div style="position:absolute;left:0;top:0;width:2518px;height:1222px;overflow:hidden"><div class="t" style="left:1964.25px;top:1175.25px;font-size:21.5px;line-height:21.5px;letter-spacing:-1.667px;color:#222;">FOLLOW-</div></div><div style="position:absolute;left:0;top:0;width:2518px;height:1222px;overflow:hidden"><div class="t" style="left:1964.25px;top:1205.75px;font-size:21.5px;line-height:21.5px;letter-spacing:-1.875px;color:#222;">UP DATE</div></div><div style="position:absolute;left:0;top:0;width:2518px;height:1222px;overflow:hidden"><div class="t" style="left:2346.60px;top:1175.25px;font-size:21.5px;line-height:21.5px;letter-spacing:-1.614px;color:#222;">INCLUDED IN PROFILE</div></div><div style="position:absolute;left:0;top:0;width:2518px;height:1222px;overflow:hidden"><div class="t" style="left:2346.60px;top:1205.75px;font-size:21.5px;line-height:21.5px;letter-spacing:-0.667px;color:#222;">LINK</div></div><div class="t" style="left:685.70px;top:500.10px;font-size:21px;line-height:21px;letter-spacing:-0.716px;color:#1a1a1a;">COVID-19 Vaccination</div><div class="t" style="left:1466.30px;top:502.00px;font-size:19.5px;line-height:19.5px;letter-spacing:-0.745px;color:#c20a0a;">Not Approved</div><div class="t" style="left:1708.40px;top:501.10px;font-size:21.5px;line-height:21.5px;letter-spacing:-1.136px;color:#e8372c;">Dec 31, 2021</div><div class="t" style="left:685.70px;top:564.10px;font-size:21px;line-height:21px;letter-spacing:-1.500px;color:#1a1a1a;">CPR/BLS</div><div class="t" style="left:1467.30px;top:566.00px;font-size:19.5px;line-height:19.5px;letter-spacing:-0.714px;color:#1e3326;">Approved</div><div class="t" style="left:1709.40px;top:565.10px;font-size:21.5px;line-height:21.5px;letter-spacing:-1.155px;color:#1a1a1a;">Sep 30, 2021</div><div class="t" style="left:684.70px;top:628.10px;font-size:21px;line-height:21px;letter-spacing:-0.143px;color:#1a1a1a;">Flu (Influenza)</div><div class="t" style="left:1466.30px;top:630.00px;font-size:19.5px;line-height:19.5px;letter-spacing:-0.745px;color:#c20a0a;">Not Approved</div><div class="t" style="left:1709.40px;top:629.10px;font-size:21.5px;line-height:21.5px;letter-spacing:-0.936px;color:#e8372c;">Oct 31, 2021</div><div class="t" style="left:684.70px;top:692.10px;font-size:21px;line-height:21px;letter-spacing:-0.133px;color:#1a1a1a;">Health Insurance</div><div class="t" style="left:1467.30px;top:694.00px;font-size:19.5px;line-height:19.5px;letter-spacing:-1.055px;color:#1e3326;">Approved (E)</div><div class="t" style="left:1709.40px;top:693.10px;font-size:21.5px;line-height:21.5px;letter-spacing:-1.155px;color:#1a1a1a;">Sep 30, 2021</div><div class="t" style="left:684.70px;top:756.10px;font-size:21px;line-height:21px;letter-spacing:-0.235px;color:#1a1a1a;">Hepatitis B (HepB)</div><div class="t" style="left:1467.30px;top:758.00px;font-size:19.5px;line-height:19.5px;letter-spacing:-0.714px;color:#1e3326;">Approved</div><div class="t" style="left:1709.40px;top:757.10px;font-size:21.5px;line-height:21.5px;letter-spacing:-1.155px;color:#1a1a1a;">Sep 30, 2021</div><div class="t" style="left:684.70px;top:820.10px;font-size:21px;line-height:21px;letter-spacing:-0.614px;color:#1a1a1a;">Measles, Mumps, Rubella (MMR)</div><div class="t" style="left:1467.30px;top:822.00px;font-size:19.5px;line-height:19.5px;letter-spacing:-0.714px;color:#1e3326;">Approved</div><div class="t" style="left:1709.40px;top:821.10px;font-size:21.5px;line-height:21.5px;letter-spacing:-1.155px;color:#1a1a1a;">Sep 30, 2021</div><div class="t" style="left:684.70px;top:884.10px;font-size:21px;line-height:21px;letter-spacing:0.250px;color:#1a1a1a;">Polio</div><div class="t" style="left:1467.30px;top:886.00px;font-size:19.5px;line-height:19.5px;letter-spacing:-0.714px;color:#1e3326;">Approved</div><div class="t" style="left:1709.40px;top:885.10px;font-size:21.5px;line-height:21.5px;letter-spacing:-1.155px;color:#1a1a1a;">Sep 30, 2021</div><div class="t" style="left:686.70px;top:1039.60px;font-size:21px;line-height:21px;letter-spacing:-0.214px;color:#1a1a1a;">Annual Physical</div><div class="t" style="left:1466.30px;top:1041.50px;font-size:19.5px;line-height:19.5px;letter-spacing:-0.870px;color:#2a2a2a;">Get Started</div><div class="t" style="left:1710.40px;top:1040.60px;font-size:21.5px;line-height:21.5px;letter-spacing:-0.945px;color:#e8372c;">Jan 31, 2022</div><div class="t" style="left:686.70px;top:1103.60px;font-size:21px;line-height:21px;letter-spacing:-0.118px;color:#1a1a1a;">Tuberculosis</div><div class="t" style="left:1466.30px;top:1105.50px;font-size:19.5px;line-height:19.5px;letter-spacing:-1.115px;color:#2a2a2a;">Pending Review</div><div class="t" style="left:1709.40px;top:1104.60px;font-size:21.5px;line-height:21.5px;letter-spacing:-1.155px;color:#e8372c;">Sep 30, 2021</div>
</div>
<div style="left:2521px;top:406px;width:10px;height:727px;background:#bababa;border-radius:5px"></div>
<div style="left:669px;top:1225px;width:1783px;height:10px;background:#b9b9b9;border-radius:5px"></div>
<div style="left:2518px;top:1222px;width:16px;height:16px;background:#fff"></div>
</body></html>
